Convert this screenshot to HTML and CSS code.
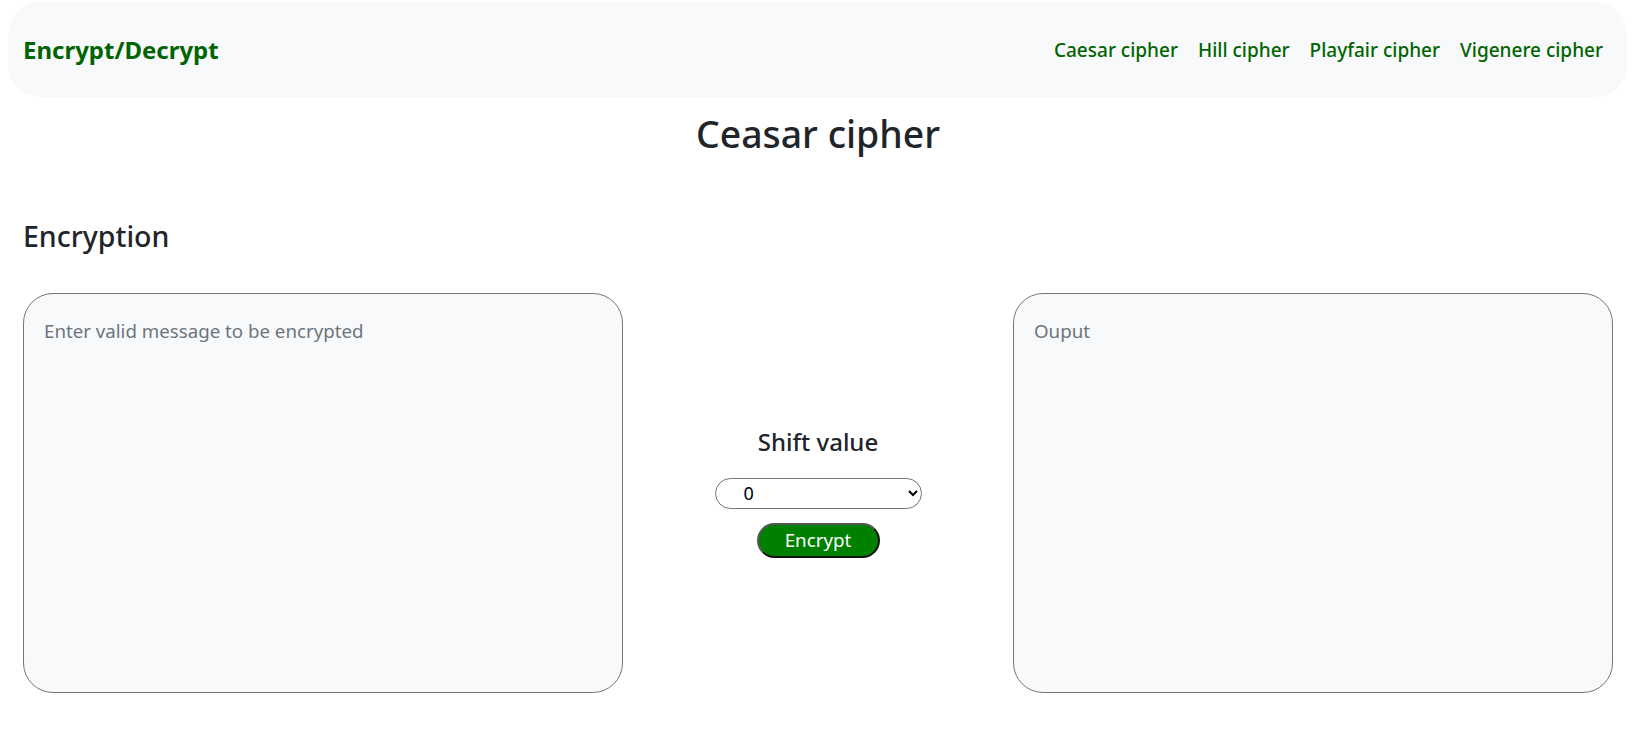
FILE: index.html
```html
<!DOCTYPE html>
<html lang="en">
<head>
<meta charset="utf-8">
<title>Caesar cipher</title>
<link rel="stylesheet" href="styles.css">
</head>
<body>
<nav class="navbar">
  <a class="brand" href="#">Encrypt/Decrypt</a>
  <ul class="nav-links">
    <li><a href="#">Caesar cipher</a></li>
    <li><a href="#">Hill cipher</a></li>
    <li><a href="#">Playfair cipher</a></li>
    <li><a href="#">Vigenere cipher</a></li>
  </ul>
</nav>
<main class="page">
  <h1 class="title">Ceasar cipher</h1>
  <h3 class="section-title">Encryption</h3>
  <div class="cipher-row">
    <textarea class="box" placeholder="Enter valid message to be encrypted"></textarea>
    <div class="controls">
      <h4 class="shift-label">Shift value</h4>
      <select class="shift-select">
        <option>0</option><option>1</option><option>2</option><option>3</option>
        <option>4</option><option>5</option><option>6</option><option>7</option>
        <option>8</option><option>9</option><option>10</option><option>11</option>
        <option>12</option><option>13</option><option>14</option><option>15</option>
        <option>16</option><option>17</option><option>18</option><option>19</option>
        <option>20</option><option>21</option><option>22</option><option>23</option>
        <option>24</option><option>25</option>
      </select>
      <button class="encrypt-btn" type="button">Encrypt</button>
    </div>
    <textarea class="box" placeholder="Ouput" readonly></textarea>
  </div>
</main>
</body>
</html>
```
FILE: styles.css
```css
* { box-sizing: border-box; }

body {
  margin: 0;
  font-family: "Noto Sans", "Open Sans", sans-serif;
  color: #212529;
  background: #fff;
}

.navbar {
  margin: 2px 8px 0 8px;
  height: 95px;
  background: #f8f9fa;
  border-radius: 32px;
  display: flex;
  align-items: center;
  justify-content: space-between;
  padding: 0 14px 0 15px;
}

.brand {
  color: #006400;
  font-weight: 700;
  font-size: 24px;
  text-decoration: none;
}

.nav-links {
  list-style: none;
  display: flex;
  margin: 0;
  padding: 0;
}

.nav-links a {
  display: block;
  padding: 8px 10px;
  color: #006400;
  font-weight: 500;
  font-size: 19px;
  text-decoration: none;
}

.page {
  padding: 0 22px 0 23px;
}

.title {
  margin: 15px 0 0 0;
  text-align: center;
  font-size: 37.4px;
  font-weight: 500;
  line-height: 1.2;
}

.section-title {
  margin: 62px 0 0 0;
  font-size: 28.5px;
  font-weight: 500;
  line-height: 1.2;
}

.cipher-row {
  margin-top: 40px;
  display: grid;
  grid-template-columns: 600px 1fr 600px;
  align-items: center;
}

.box {
  height: 400px;
  width: 100%;
  resize: none;
  background: #f8f9fa;
  border: 1px solid #777;
  border-radius: 30px;
  padding: 24px 20px 20px 20px;
  font-family: inherit;
  font-size: 18.7px;
  color: #212529;
  outline: none;
}

.box::placeholder {
  color: #6c757d;
}

.controls {
  display: flex;
  flex-direction: column;
  align-items: center;
}

.shift-label {
  margin: 0 0 21px 0;
  font-size: 24px;
  font-weight: 500;
  line-height: 1.2;
}

.shift-select {
  width: 207px;
  height: 31px;
  border: 1px solid #767676;
  border-radius: 16px;
  background: #fff;
  padding: 0 8px 0 24px;
  font-family: inherit;
  font-size: 18px;
  color: #000;
}

.encrypt-btn {
  margin-top: 14px;
  width: 123px;
  height: 35px;
  background: #008000;
  color: #fff;
  font-family: inherit;
  font-size: 18.8px;
  border-width: 2px;
  border-style: solid;
  border-color: #555 #111 #111 #555;
  border-radius: 18px;
  padding: 0;
}
```
